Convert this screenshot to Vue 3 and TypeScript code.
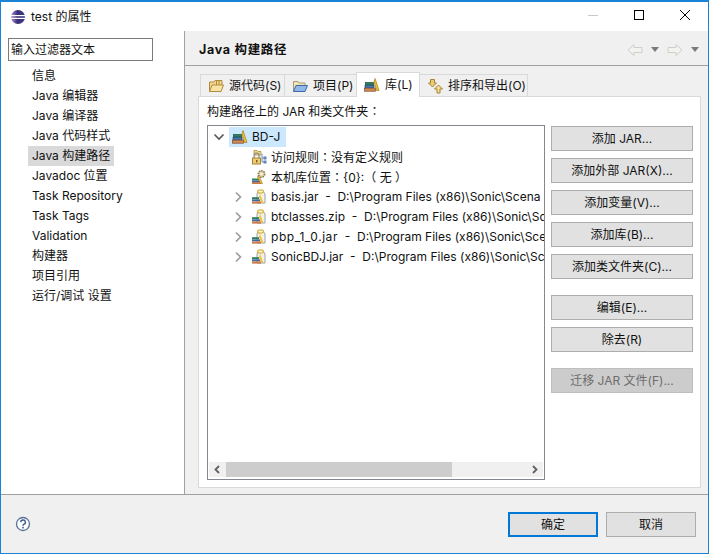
<script setup lang="ts">
const navItems: string[] = ['信息','Java 编辑器','Java 编译器','Java 代码样式','Java 构建路径','Javadoc 位置','Task Repository','Task Tags','Validation','构建器','项目引用','运行/调试 设置']
const libPath = 'D:\\Program Files (x86)\\Sonic\\'
const jars = [
  { name: 'basis.jar', tail: 'Scena' },
  { name: 'btclasses.zip', tail: 'Sc' },
  { name: 'pbp_1_0.jar', tail: 'Sce' },
  { name: 'SonicBDJ.jar', tail: 'Sc' },
]
const group1 = ['添加 JAR...','添加外部 JAR(X)...','添加变量(V)...','添加库(B)...','添加类文件夹(C)...']
const group2 = ['编辑(E)...','除去(R)']
</script>

<template>
  <div class="win">
    <div class="title">
      <svg class="logo" width="16" height="16" viewBox="0 0 16 16">
        <defs><linearGradient id="ec" x1="0" x2="1" y1="0" y2="0"><stop offset="0" stop-color="#b79ad0"/><stop offset="0.45" stop-color="#3a3078"/><stop offset="1" stop-color="#3f3a8c"/></linearGradient></defs>
        <circle cx="8" cy="8" r="7" fill="url(#ec)"/>
        <rect x="0" y="6" width="16" height="1.2" fill="#fff"/>
        <rect x="0" y="8.8" width="16" height="1.2" fill="#fff"/>
      </svg>
      <span class="title-text">test 的属性</span>
      <div class="wctl">
        <svg width="46" height="30" viewBox="0 0 46 30"><rect x="18" y="13" width="10" height="1" fill="#c8c8c8"/></svg>
        <svg width="46" height="30" viewBox="0 0 46 30"><rect x="18.5" y="8.5" width="9" height="9" fill="none" stroke="#000"/></svg>
        <svg width="46" height="30" viewBox="0 0 46 30"><path d="M18 8 L28 18 M28 8 L18 18" stroke="#000" fill="none"/></svg>
      </div>
    </div>
    <div class="body">
      <aside class="left">
        <div class="filter">输入过滤器文本</div>
        <ul class="nav">
          <li v-for="n in navItems" :key="n" :class="{ sel: n === 'Java 构建路径' }"><span>{{ n }}</span></li>
        </ul>
      </aside>
      <main class="right">
        <header class="head">
          <h1>Java 构建路径</h1>
          <div class="hnav">
            <svg width="16" height="14" viewBox="0 0 16 14"><path d="M1 7 L7 1.5 V4.5 H15 V9.5 H7 V12.5 Z" fill="#f2f2ee" stroke="#cfcfc8"/></svg>
            <svg width="8" height="5" viewBox="0 0 8 5"><path d="M0 0 H8 L4 5 Z" fill="#7a7a7a"/></svg>
            <svg width="16" height="14" viewBox="0 0 16 14"><path d="M15 7 L9 1.5 V4.5 H1 V9.5 H9 V12.5 Z" fill="#f2f2ee" stroke="#cfcfc8"/></svg>
            <svg width="8" height="5" viewBox="0 0 8 5"><path d="M0 0 H8 L4 5 Z" fill="#7a7a7a"/></svg>
          </div>
        </header>
        <div class="content">
          <div class="tabs">
            <div class="tab t1">
              <svg width="16" height="16" viewBox="0 0 16 16"><use href="#i-folder-y"/></svg><span>源代码(S)</span>
            </div>
            <div class="tab t2">
              <svg width="16" height="16" viewBox="0 0 16 16"><use href="#i-folder-b"/></svg><span>项目(P)</span>
            </div>
            <div class="tab active">
              <svg width="16" height="16" viewBox="0 0 16 16"><use href="#i-lib"/></svg><span>库(L)</span>
            </div>
            <div class="tab t4">
              <svg width="16" height="16" viewBox="0 0 16 16">
                <path d="M3.5 1.5 H7.5 V5 H9.5 L5.5 9 L1.5 5 H3.5 Z" fill="#eccb78" stroke="#a8842e"/>
                <path d="M10 15 H13 V11 H15.5 L11.5 7 L7.5 11 H10 Z" fill="#f5dc95" stroke="#a8842e"/>
              </svg><span>排序和导出(O)</span>
            </div>
          </div>
          <section class="panel">
            <div class="plabel">构建路径上的 JAR 和类文件夹<span class="cp">：</span></div>
            <div class="pbody">
              <div class="tree">
                <div class="rows">
                  <div class="row rootrow">
                    <svg class="tw" width="12" height="20" viewBox="0 0 12 20"><path d="M1.5 7.5 L6 12 L10.5 7.5" fill="none" stroke="#555" stroke-width="1.6"/></svg>
                    <div class="rootsel"><svg width="16" height="16" viewBox="0 0 16 16"><use href="#i-lib"/></svg><span>BD-J</span></div>
                  </div>
                  <div class="row sub">
                    <svg width="16" height="16" viewBox="0 0 16 16">
                      <path d="M3 1.5 H6 L7 2.5 H10 V6 H3 Z" fill="#f0d98c" stroke="#a8903c" stroke-width=".8"/>
                      <path d="M3.2 9 V6.5 A2.4 2.4 0 0 1 8 6.5 V9" fill="none" stroke="#8f8f80" stroke-width="1.3"/>
                      <rect x="1.5" y="9" width="8" height="6" fill="#eccb78" stroke="#a8842e"/>
                      <rect x="5" y="11" width="1.4" height="2.4" fill="#7a5a18"/>
                      <path d="M11 5 V13 M11 9 H13 M11 13 H13" stroke="#6f8fb8" fill="none"/>
                      <rect x="12.5" y="7.5" width="3" height="3" fill="#5f87b8"/>
                      <rect x="12.5" y="11.5" width="3" height="3" fill="#5f87b8"/>
                    </svg>
                    <span>访问规则<span class="cp">：</span>没有定义规则</span>
                  </div>
                  <div class="row sub">
                    <svg width="16" height="16" viewBox="0 0 16 16">
                      <rect x="1" y="9.5" width="7" height="1.8" fill="#2f7f63"/><rect x="1" y="11.4" width="8" height="1.6" fill="#3d6aa0"/><rect x="1" y="13" width="9" height="2" fill="#c9794b"/>
                      <path d="M7.5 6 L11.5 14.5 H9.5 L6.5 8 Z" fill="#f0c040" stroke="#a07a18" stroke-width=".6"/>
                      <circle cx="10.5" cy="5" r="3.2" fill="#e4d5a8" stroke="#8a7a50" stroke-width="1.6" stroke-dasharray="1.5 .9"/>
                      <circle cx="10.5" cy="5" r="1.1" fill="#fff"/>
                    </svg>
                    <span>本机库位置<span class="cp">：</span>{0}:（ 无 ）</span>
                  </div>
                  <div v-for="j in jars" :key="j.name" class="row jar">
                    <svg class="tw" width="12" height="20" viewBox="0 0 12 20"><path d="M4 5.5 L8.5 10 L4 14.5" fill="none" stroke="#9a9a9a" stroke-width="1.6"/></svg>
                    <svg class="jicon" width="16" height="16" viewBox="0 0 16 16"><use href="#i-jar"/></svg>
                    <span><span :class="{ wide: j.name.includes('_') }">{{ j.name }}</span>&nbsp; -&nbsp; {{ libPath + j.tail }}</span>
                  </div>
                </div>
                <div class="hscroll">
                  <svg width="17" height="15" viewBox="0 0 17 15"><path d="M10 4 L6.5 7.5 L10 11" fill="none" stroke="#606060" stroke-width="1.8"/></svg>
                  <div class="track"><div class="thumb"></div></div>
                  <svg width="17" height="15" viewBox="0 0 17 15"><path d="M7 4 L10.5 7.5 L7 11" fill="none" stroke="#606060" stroke-width="1.8"/></svg>
                </div>
              </div>
              <div class="btns">
                <button v-for="b in group1" :key="b">{{ b }}</button>
                <div class="g2">
                  <button v-for="b in group2" :key="b">{{ b }}</button>
                </div>
                <button class="dis">迁移 JAR 文件(F)...</button>
              </div>
            </div>
          </section>
        </div>
      </main>
    </div>
    <footer class="foot">
      <svg class="help" width="16" height="16" viewBox="0 0 16 16">
        <circle cx="8" cy="8" r="6.5" fill="#fff" stroke="#5a7196" stroke-width="1.3"/>
        <path d="M5.8 6.3 A2.3 2.2 0 1 1 8.6 8.4 Q8 8.7 8 9.8" fill="none" stroke="#3d5a88" stroke-width="1.4"/>
        <rect x="7.2" y="10.8" width="1.6" height="1.6" fill="#3d5a88"/>
      </svg>
      <div class="fbtns">
        <button class="ok">确定</button>
        <button>取消</button>
      </div>
    </footer>
    <svg width="0" height="0" class="defs">
      <defs>
        <symbol id="i-folder-y" viewBox="0 0 16 16">
          <path d="M1.5 13.5 V4 H6 L7 2.5 H14 V7" fill="#f3d58c" stroke="#b28a3c"/>
          <path d="M1.5 13.5 L4 7 H15.5 L13 13.5 Z" fill="#f8e2a6" stroke="#b28a3c"/>
          <path d="M8.5 3 V7 M11 3 V7" stroke="#b28a3c"/>
        </symbol>
        <symbol id="i-folder-b" viewBox="0 0 16 16">
          <path d="M1.5 13.5 V3.5 H6 L7 5 H13 V7.5" fill="#f2e4b8" stroke="#a89a6a"/>
          <path d="M1.5 13.5 L4 7.5 H15.5 L13 13.5 Z" fill="#8fb8e8" stroke="#3f67a8"/>
        </symbol>
        <symbol id="i-lib" viewBox="0 0 16 16">
          <rect x="1.5" y="5.5" width="8" height="2.5" fill="#2f7f63" stroke="#1d4d3d" stroke-width=".7"/>
          <rect x="1" y="8.4" width="9" height="2.4" fill="#4478b0" stroke="#26456e" stroke-width=".7"/>
          <rect x="0.5" y="11.2" width="11" height="3" fill="#d08a55" stroke="#7c4526" stroke-width=".7"/>
          <path d="M11 1.5 L15 13.5 H12.5 L10 5 Z" fill="#f4c430" stroke="#a87c10" stroke-width=".7"/>
        </symbol>
        <symbol id="i-jar" viewBox="0 0 16 16">
          <path d="M7 2 H12 L14 5 V14 H6 V5 Z" fill="#f5f2e4" stroke="#9aa0a8"/>
          <ellipse cx="9.5" cy="2.5" rx="3" ry="1.6" fill="#fff8d8" stroke="#d8b440" stroke-width="1.2"/>
          <path d="M9 5 L12.5 14 H10.5 L8 8 Z" fill="#f0c040"/>
          <rect x="1" y="8.2" width="7" height="2" fill="#2f7f63"/>
          <rect x="1" y="10.4" width="8" height="1.8" fill="#3d6aa0"/>
          <rect x="1" y="12.4" width="9" height="2.2" fill="#c9794b"/>
        </symbol>
      </defs>
    </svg>
  </div>
</template>

<style>
html, body { margin: 0; background: #fff; }
</style>

<style scoped>
.win {
  width: 709px; height: 554px; box-sizing: border-box; border: 1px solid #1883d7; border-top-width: 2px;
  background: #fff; display: flex; flex-direction: column; overflow: hidden;
  font-family: Inter, "Noto Sans CJK SC", sans-serif; font-size: 12px; color: #111; line-height: 20px;
}
.cp { font-family: "Noto Sans CJK TC", sans-serif; }
.wide { letter-spacing: .55px; }
.defs { position: absolute; }
.title { height: 29px; display: flex; align-items: center; padding-left: 9px; flex: none; }
.logo { margin-right: 5px; }
.title-text { font-size: 12px; }
.wctl { margin-left: auto; display: flex; }
.body { flex: 1; display: flex; min-height: 0; border-bottom: 1px solid #a0a0a0; }
.left { width: 176px; flex: none; border-right: 1px solid #a0a0a0; padding: 7px 0 0 7px; }
.filter { width: 141px; height: 21px; border: 1px solid #7a7a7a; line-height: 21px; padding-left: 2px; }
.nav { list-style: none; margin: 5px 0 0; padding: 0 0 0 20px; }
.nav li { height: 20px; }
.nav li span { display: inline-block; height: 20px; padding: 0 4px; }
.nav li.sel span { background: #d9d9d9; }
.right { flex: 1; background: #f0f0f0; display: flex; flex-direction: column; min-width: 0; }
.head { height: 31px; flex: none; border-bottom: 1px solid #a0a0a0; display: flex; align-items: center; padding: 3px 9px 0 14px; }
.head h1 { margin: 0; font-size: 12.5px; font-weight: 700; letter-spacing: .7px; color: #111; }
.hnav { margin-left: auto; display: flex; align-items: center; gap: 8px; }
.content { flex: 1; padding: 6px 7px 6px 13px; display: flex; flex-direction: column; min-height: 0; }
.tabs { display: flex; height: 24px; flex: none; padding-left: 2px; position: relative; z-index: 1; }
.tab {
  display: flex; align-items: center; gap: 5px; padding-left: 7px; box-sizing: border-box; height: 22px; margin-top: 2px;
  border: 1px solid #d9d9d9; border-bottom: none; margin-right: -1px; background: #f0f0f0; flex: none;
}
.t1 { width: 85px; }
.t2 { width: 73px; }
.t4 { width: 109px; }
.tab.active { background: #fff; width: 64px; height: 25px; margin-top: 0; margin-bottom: -1px; z-index: 2; }
.panel { flex: 1; background: #fff; border: 1px solid #d9d9d9; padding: 4px 7px 7px 8px; display: flex; flex-direction: column; min-height: 0; }
.plabel { height: 20px; flex: none; }
.pbody { flex: 1; display: flex; min-height: 0; margin-top: 4px; }
.tree { width: 338px; flex: none; box-sizing: border-box; border: 1px solid #828790; display: flex; flex-direction: column; overflow: hidden; }
.rows { flex: 1; padding-top: 1px; overflow: hidden; }
.row { height: 20px; display: flex; align-items: center; white-space: nowrap; }
.row svg, .row > span { flex: none; }
.rootrow { padding-left: 5px; }
.rootsel { display: flex; align-items: center; gap: 4px; background: #cce8ff; height: 20px; padding: 0 6px 0 3px; margin-left: 4px; }
.sub { padding-left: 43px; gap: 4px; }
.jar { padding-left: 24px; }
.jar .jicon { margin-left: 7px; margin-right: 4px; }
.hscroll { height: 15px; flex: none; margin: 0 1px 2px; display: flex; background: #f0f0f0; }
.hscroll svg { flex: none; }
.track { flex: 1; }
.thumb { width: 226px; height: 15px; background: #cdcdcd; }
.btns { width: 142px; flex: none; margin-left: 6px; padding-top: 1px; display: flex; flex-direction: column; gap: 7px; }
button {
  height: 25px; box-sizing: border-box; border: 1px solid #adadad; background: #e1e1e1; color: #111;
  font: inherit; padding: 0; display: block; width: 142px; flex: none;
}
.g2 { margin-top: 9px; display: flex; flex-direction: column; gap: 7px; }
.btns .dis { margin-top: 9px; background: #cccccc; border-color: #bfbfbf; color: #6d6d6d; }
.foot { height: 58px; flex: none; background: #f0f0f0; display: flex; align-items: flex-start; }
.help { margin: 21px 0 0 14px; }
.fbtns { margin-left: auto; margin-right: 12px; margin-top: 17px; display: flex; gap: 8px; }
.fbtns button { width: 90px; height: 25px; }
.fbtns .ok { border: 2px solid #0078d7; }
</style>
